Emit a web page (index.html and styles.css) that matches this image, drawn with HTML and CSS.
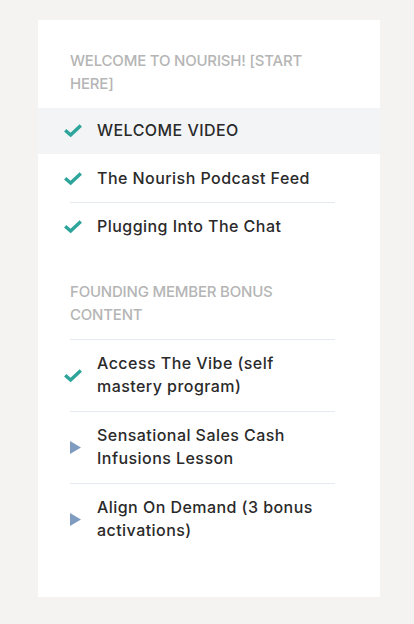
FILE: index.html
```html
<!DOCTYPE html>
<html lang="en">
<head>
<meta charset="utf-8">
<title>Nourish</title>
<link rel="stylesheet" href="styles.css">
</head>
<body>
<div class="card">
  <section class="section">
    <h2 class="section-title">Welcome to Nourish! [Start Here]</h2>
    <ul class="list">
      <li class="item active">
        <div class="item-inner first">
          <span class="icon"><svg class="check" width="18" height="13" viewBox="0 0 18 13"><polyline points="1.2,6.2 6.6,11 16.8,1.4" fill="none" stroke="#2ea59b" stroke-width="3.4"/></svg></span>
          <span class="label">WELCOME VIDEO</span>
        </div>
      </li>
      <li class="item">
        <div class="item-inner first">
          <span class="icon"><svg class="check" width="18" height="13" viewBox="0 0 18 13"><polyline points="1.2,6.2 6.6,11 16.8,1.4" fill="none" stroke="#2ea59b" stroke-width="3.4"/></svg></span>
          <span class="label">The Nourish Podcast Feed</span>
        </div>
      </li>
      <li class="item">
        <div class="item-inner">
          <span class="icon"><svg class="check" width="18" height="13" viewBox="0 0 18 13"><polyline points="1.2,6.2 6.6,11 16.8,1.4" fill="none" stroke="#2ea59b" stroke-width="3.4"/></svg></span>
          <span class="label">Plugging Into The Chat</span>
        </div>
      </li>
    </ul>
  </section>
  <section class="section">
    <h2 class="section-title">Founding Member Bonus Content</h2>
    <ul class="list">
      <li class="item">
        <div class="item-inner">
          <span class="icon"><svg class="check" width="18" height="13" viewBox="0 0 18 13"><polyline points="1.2,6.2 6.6,11 16.8,1.4" fill="none" stroke="#2ea59b" stroke-width="3.4"/></svg></span>
          <span class="label">Access The Vibe (self mastery program)</span>
        </div>
      </li>
      <li class="item">
        <div class="item-inner">
          <span class="icon"><svg class="play" width="11" height="13" viewBox="0 0 11 13"><polygon points="0,0 11,6.5 0,13" fill="#7f9cc0"/></svg></span>
          <span class="label">Sensational Sales Cash Infusions Lesson</span>
        </div>
      </li>
      <li class="item">
        <div class="item-inner">
          <span class="icon"><svg class="play" width="11" height="13" viewBox="0 0 11 13"><polygon points="0,0 11,6.5 0,13" fill="#7f9cc0"/></svg></span>
          <span class="label">Align On Demand (3 bonus activations)</span>
        </div>
      </li>
    </ul>
  </section>
</div>
</body>
</html>
```
FILE: styles.css
```css
html, body {
  margin: 0;
  padding: 0;
  background: #f4f3f1;
}
body {
  font-family: "Inter", "Noto Sans", sans-serif;
  padding: 20px 0 28px 38px;
}
.card {
  width: 342px;
  background: #ffffff;
  padding-bottom: 42px;
  box-sizing: border-box;
}
.section-title {
  margin: 0;
  padding: 29px 45px 13px 32px;
  font-size: 15px;
  font-weight: 500;
  line-height: 23px;
  letter-spacing: -0.2px;
  text-transform: uppercase;
  color: #b5b5b5;
}
.list {
  list-style: none;
  margin: 0;
  padding: 0;
}
.item {
  padding: 0 45px 0 32px;
}
.item.active {
  background: #f3f4f6;
}
.item-inner {
  display: flex;
  align-items: center;
  border-top: 1px solid #e4e9f2;
  padding: 12px 0;
}
.item-inner.first {
  border-top-color: transparent;
}
.item.active .item-inner {
  border-top: 0;
  padding: 11px 0 11px;
}
.icon {
  flex: none;
  width: 27px;
  display: flex;
  align-items: center;
}
.check {
  margin-left: -6px;
  display: block;
}
.play {
  display: block;
}
.label {
  flex: 1;
  font-size: 16px;
  font-weight: 500;
  line-height: 23.5px;
  letter-spacing: 0.45px;
  color: #2a2a2a;
}
```
